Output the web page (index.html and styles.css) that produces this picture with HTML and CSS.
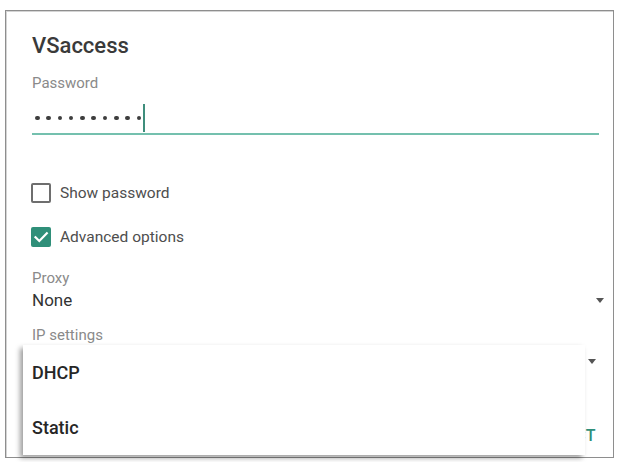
FILE: index.html
```html
<!DOCTYPE html>
<html lang="en">
<head>
<meta charset="utf-8">
<title>VSaccess</title>
<link rel="stylesheet" href="styles.css">
</head>
<body>
<div class="frame">
  <div class="title">VSaccess</div>
  <div class="label label-pw">Password</div>
  <div class="field">
    <span class="dots" aria-label="password">
      <i></i><i></i><i></i><i></i><i></i><i></i><i></i><i></i><i></i><i></i>
    </span>
    <span class="cursor"></span>
  </div>
  <div class="check check-1">
    <span class="box"></span>
    <span class="check-text">Show password</span>
  </div>
  <div class="check check-2">
    <span class="box box-on">
      <svg viewBox="0 0 20 20" width="20" height="20"><path d="M4.5 10.2 L8.3 14 L15.8 6.3" fill="none" stroke="#fff" stroke-width="2.2" stroke-linecap="square"/></svg>
    </span>
    <span class="check-text">Advanced options</span>
  </div>
  <div class="label label-proxy">Proxy</div>
  <div class="select select-proxy">
    <span class="value">None</span>
    <span class="arrow"></span>
  </div>
  <div class="label label-ip">IP settings</div>
  <div class="select select-ip">
    <span class="value"></span>
    <span class="arrow"></span>
  </div>
  <div class="actions"><span class="btn">CONNECT</span></div>

  <div class="menu">
    <div class="menu-item">DHCP</div>
    <div class="menu-item">Static</div>
  </div>
</div>
</body>
</html>
```

FILE: styles.css
```css
html, body {
  margin: 0;
  padding: 0;
  background: #ffffff;
}
body {
  width: 624px;
  height: 462px;
  overflow: hidden;
  font-family: Roboto, "Noto Sans", "Liberation Sans", sans-serif;
}
.frame {
  position: relative;
  box-sizing: border-box;
  margin: 10px 0 0 5px;
  width: 609px;
  height: 448px;
  border: 1px solid #8e8e8e;
  box-shadow: inset 1px 1px 0 #d4d4d4;
  padding: 23px 14px 0 26px;
  background: #fff;
}
.title {
  font-size: 22px;
  line-height: 24px;
  font-weight: 500;
  color: #3a3a3a;
}
.label {
  font-size: 15px;
  line-height: 20px;
  color: #8a8a8a;
}
.label-pw { margin-top: 15px; }
.field {
  box-sizing: border-box;
  height: 42px;
  padding-top: 10px;
  border-bottom: 2px solid #74c0ae;
  display: flex;
  align-items: center;
}
.dots {
  display: flex;
  gap: 6.7px;
  margin-left: 3px;
}
.dots i {
  display: block;
  width: 4.6px;
  height: 4.6px;
  border-radius: 50%;
  background: #3e3e3e;
}
.cursor {
  width: 2px;
  height: 28px;
  margin-left: 2px;
  background: #3f8e7c;
}
.check {
  display: flex;
  align-items: center;
  height: 30px;
}
.check-1 { margin-top: 43px; }
.check-2 { margin-top: 14px; }
.box {
  box-sizing: border-box;
  width: 20px;
  height: 20px;
  border: 2px solid #6e6e6e;
  border-radius: 2px;
  margin-left: -1px;
  display: flex;
}
.box-on {
  border: none;
  background: #2f8f79;
}
.check-text {
  margin-left: 9px;
  font-size: 15.5px;
  color: #4e4e4e;
}
.label-proxy { margin-top: 16px; }
.select {
  display: flex;
  align-items: center;
  justify-content: space-between;
  height: 22px;
}
.select .value {
  font-size: 17px;
  line-height: 22px;
  color: #333;
}
.select-proxy { margin-top: 1px; margin-right: -5px; }
.select-ip { margin-top: 1px; margin-right: 3px; }
.select-ip .arrow { margin-top: 8px; }
.arrow {
  width: 0;
  height: 0;
  border-left: 4.5px solid transparent;
  border-right: 4.5px solid transparent;
  border-top: 5px solid #555;
}
.label-ip { margin-top: 14px; }
.actions {
  display: flex;
  justify-content: flex-end;
  margin-top: 58px;
  margin-right: 3px;
}
.btn {
  font-size: 16px;
  font-weight: 500;
  color: #2f8f79;
  letter-spacing: 0.5px;
}
.menu {
  position: absolute;
  left: 17px;
  top: 334px;
  width: 562px;
  height: 110px;
  background: #fff;
  box-shadow: -3px 3px 5px rgba(0, 0, 0, 0.38);
  display: flex;
  flex-direction: column;
}
.menu-item {
  height: 55px;
  display: flex;
  align-items: center;
  padding-left: 9px;
  font-size: 18px;
  font-weight: 500;
  color: #262626;
}
```
